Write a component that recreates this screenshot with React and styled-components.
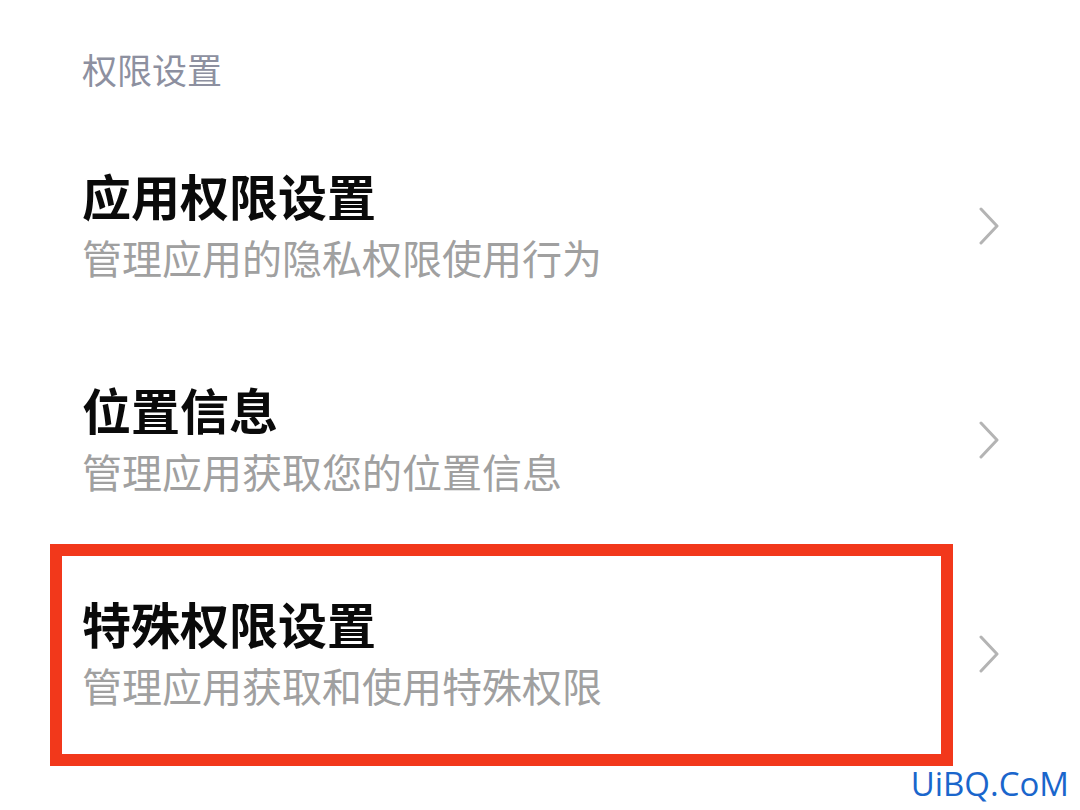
import React from 'react';
import styled, { createGlobalStyle } from 'styled-components';

const GlobalStyle = createGlobalStyle`
  html, body {
    margin: 0;
    padding: 0;
    background: #fff;
  }
  body {
    font-family: "Noto Sans CJK SC", "Noto Sans", sans-serif;
  }
`;

const items = [
  { title: '应用权限设置', desc: '管理应用的隐私权限使用行为' },
  { title: '位置信息', desc: '管理应用获取您的位置信息' },
  { title: '特殊权限设置', desc: '管理应用获取和使用特殊权限', marked: true },
];

const App = () => {
  return (
    <>
      <GlobalStyle />
      <Page>
        <SectionTitle>权限设置</SectionTitle>
        <List>
          {items.map((item) => (
            <Row key={item.title}>
              <TextBox>
                <Title>{item.title}</Title>
                <Desc>{item.desc}</Desc>
              </TextBox>
              <Chevron width="22" height="38" viewBox="0 0 22 38">
                <polyline
                  points="3,2 19,19 3,36"
                  fill="none"
                  stroke="#b4b4b4"
                  strokeWidth="3"
                  strokeLinecap="round"
                  strokeLinejoin="round"
                />
              </Chevron>
              {item.marked && <Highlight />}
            </Row>
          ))}
        </List>
        <Watermark>UiBQ.CoM</Watermark>
      </Page>
    </>
  );
};

const Page = styled.div`
  width: 1080px;
  height: 810px;
  position: relative;
  overflow: hidden;
  background: #fff;
  display: flex;
  flex-direction: column;
`;

const SectionTitle = styled.div`
  padding: 44px 0 0 82px;
  height: 50px;
  line-height: 50px;
  font-size: 35px;
  color: #8d90a0;
`;

const List = styled.div`
  margin-top: 25px;
  display: flex;
  flex-direction: column;
`;

const Row = styled.div`
  position: relative;
  height: 214px;
  box-sizing: border-box;
  padding: 0 80px 0 82px;
  display: flex;
  align-items: center;
  justify-content: space-between;
`;

const TextBox = styled.div`
  display: flex;
  flex-direction: column;
`;

const Title = styled.div`
  font-size: 49px;
  line-height: 62px;
  font-weight: 700;
  color: #0a0a0a;
`;

const Desc = styled.div`
  font-size: 40px;
  line-height: 62px;
  color: #a0a0a0;
`;

const Chevron = styled.svg`
  flex-shrink: 0;
`;

const Highlight = styled.div`
  position: absolute;
  left: 50px;
  top: -3px;
  width: 903px;
  height: 222px;
  box-sizing: border-box;
  border: 12px solid #f2381b;
  pointer-events: none;
`;

const Watermark = styled.div`
  position: absolute;
  right: 11px;
  bottom: 6px;
  font-family: "Open Sans", "Noto Sans", sans-serif;
  font-size: 33px;
  line-height: 40px;
  color: #1a66cc;
`;

export default App;
